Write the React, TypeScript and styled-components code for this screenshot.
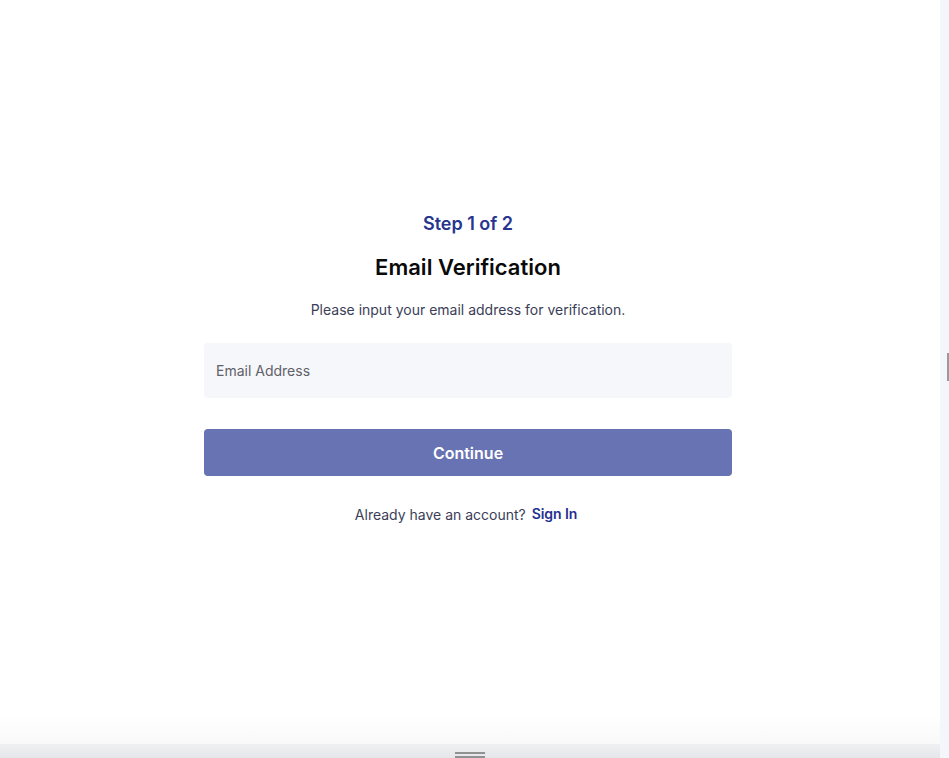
import React from "react";
import styled, { createGlobalStyle } from "styled-components";

const Global = createGlobalStyle`
  html, body { margin: 0; padding: 0; background: #ffffff; }
  body { font-family: Inter, "Noto Sans", "Liberation Sans", sans-serif; -webkit-font-smoothing: antialiased; }
  * { box-sizing: border-box; }
`;

const Frame = styled.div`
  display: flex;
  width: 949px;
  height: 758px;
  overflow: hidden;
`;

const LeftColumn = styled.div`
  display: flex;
  flex-direction: column;
  width: 940px;
  height: 758px;
`;

const Main = styled.main`
  flex: 1;
  display: flex;
  flex-direction: column;
  align-items: center;
  padding: 212px 4px 0 0;
  background: linear-gradient(to bottom, #ffffff 0%, #ffffff 96%, #f9f9f9 100%);
`;

const Form = styled.div`
  width: 528px;
  display: flex;
  flex-direction: column;
  align-items: center;
`;

const Step = styled.div`
  font-size: 18px;
  line-height: 24px;
  font-weight: 600;
  color: #27358f;
`;

const Title = styled.h1`
  margin: 17px 0 0;
  font-size: 22px;
  line-height: 28px;
  font-weight: 600;
  color: #0a0a0a;
`;

const Subtitle = styled.p`
  margin: 19px 0 0;
  font-size: 14px;
  line-height: 20px;
  color: #3b3e58;
`;

const Input = styled.input`
  margin-top: 23px;
  width: 100%;
  height: 55px;
  border: none;
  border-radius: 4px;
  background: #f6f7fb;
  padding: 0 12px 1px;
  font-family: inherit;
  font-size: 14px;
  color: #222;
  outline: none;
  &::placeholder { color: #5f6168; }
`;

const Button = styled.button`
  margin-top: 31px;
  width: 100%;
  height: 47px;
  border: none;
  border-radius: 4px;
  background: #6773b2;
  color: #ffffff;
  font-family: inherit;
  font-size: 16px;
  font-weight: 600;
  cursor: pointer;
`;

const Footer = styled.div`
  margin: 29px 4px 0 0;
  display: flex;
  align-items: center;
  gap: 6px;
  font-size: 14px;
  line-height: 20px;
  color: #3b3e58;
`;

const SignIn = styled.a`
  font-weight: 600;
  color: #24308f;
  text-decoration: none;
  margin-top: -2px;
  letter-spacing: -0.1px;
`;

const BottomBar = styled.div`
  height: 14px;
  display: flex;
  flex-direction: column;
  align-items: center;
  padding-top: 8px;
  gap: 2px;
  background: linear-gradient(to bottom, #eef0f2, #e4e6e9);
`;

const HandleLine = styled.div`
  width: 30px;
  height: 2px;
  flex-shrink: 0;
  background: #919191;
`;

const RightStrip = styled.div`
  width: 9px;
  height: 758px;
  background: #f3f7fb;
  display: flex;
  justify-content: flex-end;
  padding-top: 353px;
`;

const ScrollMark = styled.div`
  width: 2px;
  height: 28px;
  background: #9a9a9a;
`;

export default function App() {
  return (
    <>
      <Global />
      <Frame>
        <LeftColumn>
          <Main>
            <Form>
              <Step>Step 1 of 2</Step>
              <Title>Email Verification</Title>
              <Subtitle>Please input your email address for verification.</Subtitle>
              <Input type="email" placeholder="Email Address" />
              <Button>Continue</Button>
              <Footer>
                <span>Already have an account?</span>
                <SignIn href="#">Sign In</SignIn>
              </Footer>
            </Form>
          </Main>
          <BottomBar>
            <HandleLine />
            <HandleLine />
          </BottomBar>
        </LeftColumn>
        <RightStrip>
          <ScrollMark />
        </RightStrip>
      </Frame>
    </>
  );
}
